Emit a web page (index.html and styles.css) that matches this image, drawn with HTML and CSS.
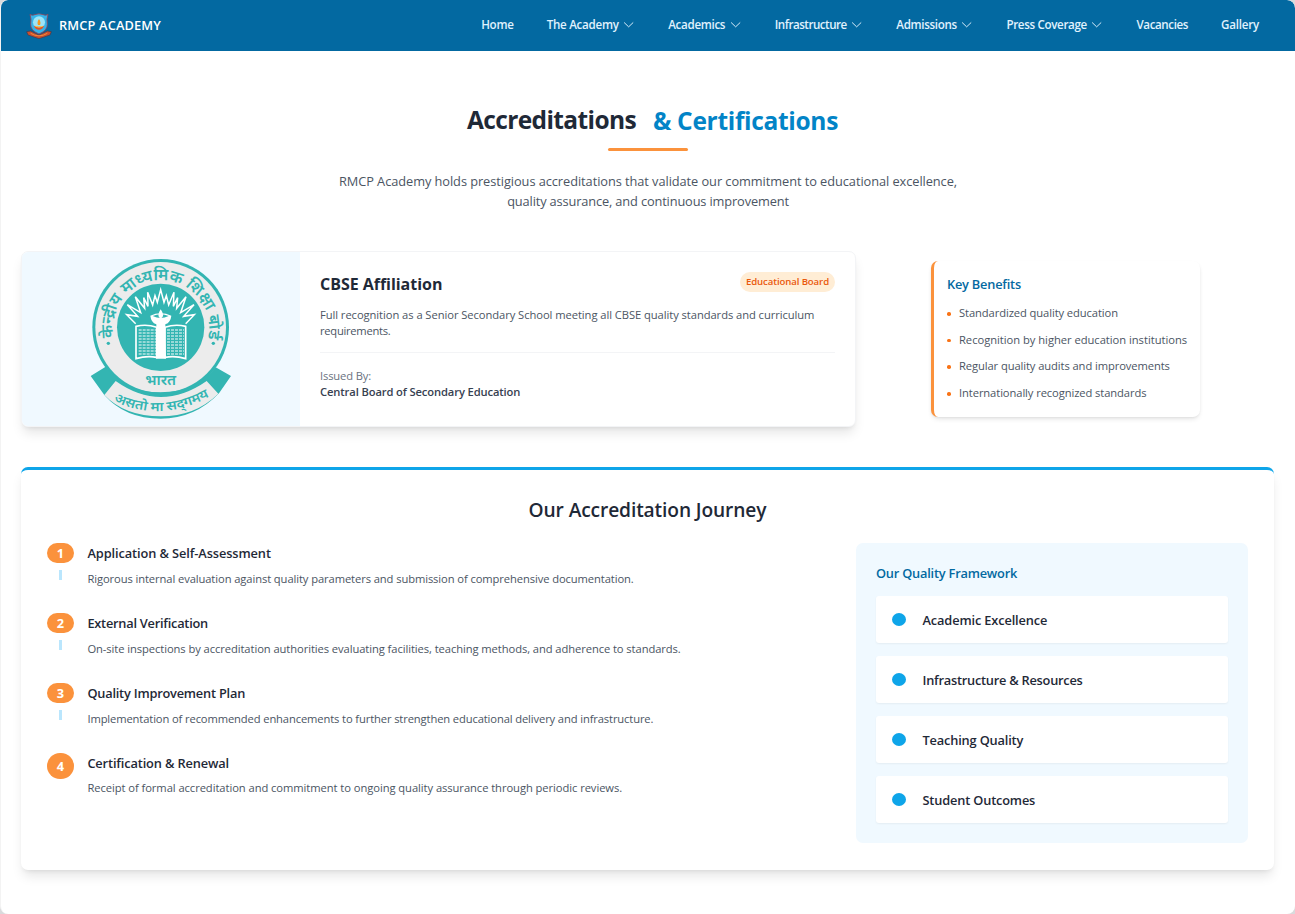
FILE: index.html
```html
<!DOCTYPE html>
<html lang="en">
<head>
<meta charset="utf-8">
<title>RMCP Academy</title>
<link rel="stylesheet" href="styles.css">
</head>
<body>
<header class="nav">
  <div class="brand">
    <svg class="crest" viewBox="0 0 78 78">
      <path d="M2 56 L14 54 L39 66 L64 54 L76 56 L72 66 L39 77 L6 66Z" fill="#c8502f" stroke="#3c3b52" stroke-width="2"/>
      <path d="M12 4 Q18 9 26 5 Q39 0 52 5 Q60 9 66 4 Q61 18 64 34 Q65 52 39 63 Q13 52 14 34 Q17 18 12 4Z" fill="#35b4ea" stroke="#94475b" stroke-width="2.5"/>
      <circle cx="39" cy="28" r="18" fill="#9de4f7"/>
      <path d="M39 18 Q46 28 42 36 L36 36 Q32 28 39 18Z" fill="#f59a23"/>
      <path d="M24 38 Q39 44 54 38 Q50 50 39 50 Q28 50 24 38Z" fill="#e0532b"/>
      <path d="M28 40 Q39 45 50 40" stroke="#f8cf4a" stroke-width="3" fill="none"/>
      <path d="M14 61 Q39 76 64 61" stroke="#f08a3c" stroke-width="3" fill="none"/>
    </svg>
    <span class="brand-name">RMCP ACADEMY</span>
  </div>
  <nav class="menu">
    <a><span class="t24">Home</span></a>
    <a><span class="t27">The Academy</span><svg class="chev" viewBox="0 0 14 14"><path d="M2.5 5 L7 9.3 L11.5 5"/></svg></a>
    <a><span class="t31">Academics</span><svg class="chev" viewBox="0 0 14 14"><path d="M2.5 5 L7 9.3 L11.5 5"/></svg></a>
    <a><span class="t49">Infrastructure</span><svg class="chev" viewBox="0 0 14 14"><path d="M2.5 5 L7 9.3 L11.5 5"/></svg></a>
    <a><span class="t34">Admissions</span><svg class="chev" viewBox="0 0 14 14"><path d="M2.5 5 L7 9.3 L11.5 5"/></svg></a>
    <a><span class="t34">Press Coverage</span><svg class="chev" viewBox="0 0 14 14"><path d="M2.5 5 L7 9.3 L11.5 5"/></svg></a>
    <a><span class="t41">Vacancies</span></a>
    <a><span class="t21">Gallery</span></a>
  </nav>
</header>
<main class="page">
  <section class="intro">
    <h1 class="title"><span class="title-main">Accreditations</span><span class="title-accent">&amp; Certifications</span></h1>
    <div class="rule"></div>
    <p class="lead"><span class="t6">RMCP Academy holds prestigious accreditations that validate our commitment to educational excellence,</span><span class="t14">quality assurance, and continuous improvement</span></p>
  </section>
  <section class="top-row">
    <article class="card">
      <div class="card-media">
        <svg class="emblem" viewBox="42 36 432 492">
          <circle cx="257" cy="247" r="205" fill="#33b5b2"/>
          <circle cx="257" cy="247" r="196" fill="#ececec"/>
          <path d="M47 393 L92 365 Q150 442 257 442 Q364 442 422 367 L468 393 L432 445 Q360 521 257 521 Q150 521 88 450Z" fill="#33b5b2"/>
          <path d="M122 408 Q257 504 395 408 L430 446 Q360 514 257 514 Q150 514 88 450Z" fill="#ececec"/>
          <circle cx="257" cy="247" r="131" fill="#33b5b2"/>
          <path d="M182 236 L155 209 L188 214 L157 179 L197 203 L181 155 L209 190 L206 158 L219 184 L218 142 L233 180 L240 152 L247 172 L257 134 L267 172 L274 152 L281 180 L297 142 L295 184 L308 158 L305 190 L333 155 L317 203 L357 179 L326 214 L358 209 L332 236" fill="none" stroke="#fff" stroke-width="4.5"/>
          <path d="M183 244 Q215 236 245 247 L245 337 Q215 331 183 341Z M332 244 Q300 236 270 247 L270 337 Q300 331 332 341Z" fill="#33b5b2" stroke="#fff" stroke-width="5"/>
          <path class="print" d="M191 255H243M191 264H243M191 273H243M191 282H243M191 291H243M191 300H243M191 309H243M191 318H243M191 327H243M276 255H327M276 264H327M276 273H327M276 282H327M276 291H327M276 300H327M276 309H327M276 318H327M276 327H327"/>
          <path d="M226 212 Q257 198 289 212 Q287 232 271 238 Q270 290 273 341 L243 341 Q246 290 244 238 Q228 232 226 212Z" fill="#fff"/>
          <path d="M233 213 Q257 203 281 213 Q257 225 233 213Z" fill="#33b5b2"/>
          <path d="M257 193 Q272 214 257 221 Q243 214 257 193Z" fill="#fff"/>
          <path id="ringArc" d="M115 278 A145 145 0 1 1 399 282" fill="none"/>
          <path id="ribbonArc" d="M113 466 Q257 538 412 450" fill="none"/>
          <text class="emblem-ring"><textPath href="#ringArc" textLength="514" lengthAdjust="spacingAndGlyphs">केन्द्रीय माध्यमिक शिक्षा बोर्ड</textPath></text>
          <circle cx="100" cy="295" r="5" fill="#33b5b2"/><circle cx="415" cy="295" r="5" fill="#33b5b2"/>
          <text class="emblem-name" x="257" y="419">भारत</text>
          <text class="emblem-motto"><textPath href="#ribbonArc" startOffset="3" textLength="300" lengthAdjust="spacingAndGlyphs">असतो मा सद्&zwnj;गमय</textPath></text>
        </svg>
      </div>
      <div class="card-body">
        <div class="card-head"><h2 class="t3">CBSE Affiliation</h2><span class="pill">Educational Board</span></div>
        <p class="card-text"><span class="t6">Full recognition as a Senior Secondary School meeting all CBSE quality standards and curriculum</span> <span class="t27">requirements.</span></p>
        <div class="issued"><div class="issued-label t14">Issued By:</div><div class="issued-name t12">Central Board of Secondary Education</div></div>
      </div>
    </article>
    <aside class="benefits">
      <h3 class="t21">Key Benefits</h3>
      <ul>
        <li><span class="t9">Standardized quality education</span></li>
        <li><span class="t3">Recognition by higher education institutions</span></li>
        <li><span class="t9">Regular quality audits and improvements</span></li>
        <li><span class="t9">Internationally recognized standards</span></li>
      </ul>
    </aside>
  </section>
  <section class="journey">
    <h2 class="journey-title t12">Our Accreditation Journey</h2>
    <div class="journey-grid">
      <ol class="steps">
        <li><div class="marker"><b>1</b><i></i></div><div><h4 class="t9">Application &amp; Self-Assessment</h4><p class="t9">Rigorous internal evaluation against quality parameters and submission of comprehensive documentation.</p></div></li>
        <li><div class="marker"><b>2</b><i></i></div><div><h4 class="t24">External Verification</h4><p class="t8">On-site inspections by accreditation authorities evaluating facilities, teaching methods, and adherence to standards.</p></div></li>
        <li><div class="marker"><b>3</b><i></i></div><div><h4 class="t21">Quality Improvement Plan</h4><p class="t12">Implementation of recommended enhancements to further strengthen educational delivery and infrastructure.</p></div></li>
        <li class="last"><div class="marker"><b>4</b></div><div><h4 class="t14">Certification &amp; Renewal</h4><p class="t6">Receipt of formal accreditation and commitment to ongoing quality assurance through periodic reviews.</p></div></li>
      </ol>
      <aside class="framework">
        <h3 class="t21">Our Quality Framework</h3>
        <ul>
          <li><span class="t14">Academic Excellence</span></li>
          <li><span class="t24">Infrastructure &amp; Resources</span></li>
          <li><span class="t16">Teaching Quality</span></li>
          <li><span class="t16">Student Outcomes</span></li>
        </ul>
      </aside>
    </div>
  </section>
</main>
</body>
</html>
```
FILE: styles.css
```css
* { box-sizing: border-box; }
html { background: #d9dadc; }
body { margin: 0; height: 914px; overflow: hidden; background: #fff; border-radius: 8px; border-left: 1px solid #f3f3f3; font-family: "Open Sans", "Noto Sans", sans-serif; color: #1f2937; }
h1, h2, h3, h4, p, ul, ol { margin: 0; padding: 0; list-style: none; }

/* tracking steps, in hundredths of a pixel */
.t3 { letter-spacing: -.03px; }
.t6 { letter-spacing: -.064px; }
.t8 { letter-spacing: -.08px; }
.t9 { letter-spacing: -.095px; }
.t12 { letter-spacing: -.123px; }
.t14 { letter-spacing: -.14px; }
.t16 { letter-spacing: -.165px; }
.t21 { letter-spacing: -.21px; }
.t24 { letter-spacing: -.24px; }
.t27 { letter-spacing: -.27px; }
.t31 { letter-spacing: -.31px; }
.t34 { letter-spacing: -.335px; }
.t41 { letter-spacing: -.41px; }
.t49 { letter-spacing: -.49px; }

.nav { height: 51px; margin-left: -1px; padding: 0 36px 2px 26px; display: flex; align-items: center; justify-content: space-between; background: #0369a1; border-radius: 8px 8px 0 0; color: #fff; }
.brand { display: flex; align-items: center; gap: 7px; }
.crest { width: 26px; height: 26px; margin-top: 2px; }
.brand-name { font-size: 12.8px; font-weight: 600; line-height: 20px; letter-spacing: .15px; }
.menu { display: flex; gap: 33px; color: #e0f2fe; font-size: 11.6px; font-weight: 600; line-height: 20px; }
.menu a { display: flex; align-items: center; gap: 3.3px; }
.chev { width: 13.3px; height: 13.3px; fill: none; stroke: currentColor; stroke-width: 1; stroke-linecap: round; stroke-linejoin: round; }

.page { padding: 52px 20px 0 20px; }
.intro { display: flex; flex-direction: column; align-items: center; }
.title { display: flex; gap: 17px; padding-left: 9px; font-size: 24.5px; font-weight: 700; line-height: 34px; }
.title-main { letter-spacing: -.62px; }
.title-accent { color: #0284c7; padding-top: 1px; letter-spacing: -.31px; }
.rule { width: 80px; height: 3px; margin-top: 10px; border-radius: 2px; background: #fb923c; }
.lead { margin-top: 20px; display: flex; flex-direction: column; align-items: center; color: #4b5563; font-size: 12.8px; line-height: 20px; }

.top-row { display: flex; align-items: center; gap: 75px; margin-top: 40px; }
.card { display: flex; width: 835px; height: 176px; overflow: hidden; background: #fff; border: 1px solid #f3f4f6; border-radius: 7px; box-shadow: 0 8px 12px -2px rgba(0,0,0,.1), 0 3px 5px -3px rgba(0,0,0,.1); }
.card-media { width: 278px; display: flex; align-items: center; justify-content: center; background: #f0f9ff; }
.emblem { width: 144px; height: 164px; }
.emblem text { font-family: "Noto Sans Devanagari", "Noto Sans", sans-serif; font-weight: 600; fill: #33b5b2; }
.emblem-ring { font-size: 49px; }
.emblem-name { font-size: 45px; text-anchor: middle; }
.emblem-motto { font-size: 39px; }
.print { stroke: #fff; stroke-width: 4; stroke-dasharray: 9 3; opacity: .65; }
.card-body { flex: 1; padding: 20px; }
.card-head { display: flex; justify-content: space-between; align-items: flex-start; }
.card-head h2 { font-size: 16px; font-weight: 700; line-height: 24px; }
.pill { padding: 0 6px; border-radius: 10px; background: #ffedd5; color: #ea580c; font-size: 9.6px; font-weight: 600; line-height: 20px; letter-spacing: -.1px; }
.card-text { margin-top: 11px; color: #4b5563; font-size: 11.2px; line-height: 16px; }
.issued { margin-top: 13px; padding-top: 15px; border-top: 1px solid #f3f4f6; font-size: 11.2px; line-height: 16px; }
.issued-label { color: #6b7280; }
.issued-name { color: #374151; font-weight: 600; }

.benefits { width: 269px; height: 156px; padding: 13px 0 0 13px; border-left: 3px solid #fb923c; border-radius: 7px; background: #fff; box-shadow: 0 3px 5px -1px rgba(0,0,0,.1), 0 1px 3px -1px rgba(0,0,0,.1); }
.benefits h3 { color: #0369a1; font-size: 12.8px; font-weight: 600; line-height: 20px; }
.benefits ul { margin-top: 11px; display: grid; gap: 10.6px; color: #4b5563; font-size: 11.2px; line-height: 16px; }
.benefits li { display: flex; align-items: center; gap: 8.5px; white-space: nowrap; }
.benefits li::before { content: ""; width: 3.5px; height: 3.5px; margin-top: 2px; border-radius: 50%; background: #f97316; }

.journey { margin-top: 40px; width: 1253px; height: 403px; padding: 26px; border-top: 3px solid #0ea5e9; border-radius: 7px; background: #fff; box-shadow: 0 8px 12px -2px rgba(0,0,0,.1), 0 3px 5px -3px rgba(0,0,0,.1); }
.journey-title { text-align: center; font-size: 19.2px; font-weight: 600; line-height: 27px; }
.journey-grid { display: grid; grid-template-columns: 769px 392px; gap: 40px; margin-top: 20px; }
.steps li { display: flex; gap: 13.4px; height: 70px; }
.marker { display: flex; flex-direction: column; align-items: center; gap: 7px; }
.marker b { width: 27px; height: 20px; border-radius: 10px; background: #fb923c; color: #fff; font-size: 12.8px; line-height: 20px; text-align: center; }
.marker i { width: 3px; height: 10px; background: #bae6fd; }
.last .marker b { height: 26px; border-radius: 13px; line-height: 26px; }
.steps h4 { font-size: 12.8px; font-weight: 600; line-height: 20px; }
.steps p { margin-top: 8px; color: #4b5563; font-size: 11.2px; line-height: 16px; }
.steps .last p { margin-top: 7px; }
.framework { height: 300px; padding: 20px; border-radius: 7px; background: #f0f9ff; }
.framework h3 { color: #0369a1; font-size: 12.8px; font-weight: 600; line-height: 20px; }
.framework ul { margin-top: 13px; display: grid; gap: 13px; }
.framework li { display: flex; align-items: center; gap: 16.5px; height: 47px; padding: 0 16px; border-radius: 3px; background: #fff; box-shadow: 0 1px 2px rgba(0,0,0,.05); font-size: 12.8px; font-weight: 600; }
.framework li::before { content: ""; width: 14px; height: 13px; border-radius: 50%; background: #0ea5e9; }
```
